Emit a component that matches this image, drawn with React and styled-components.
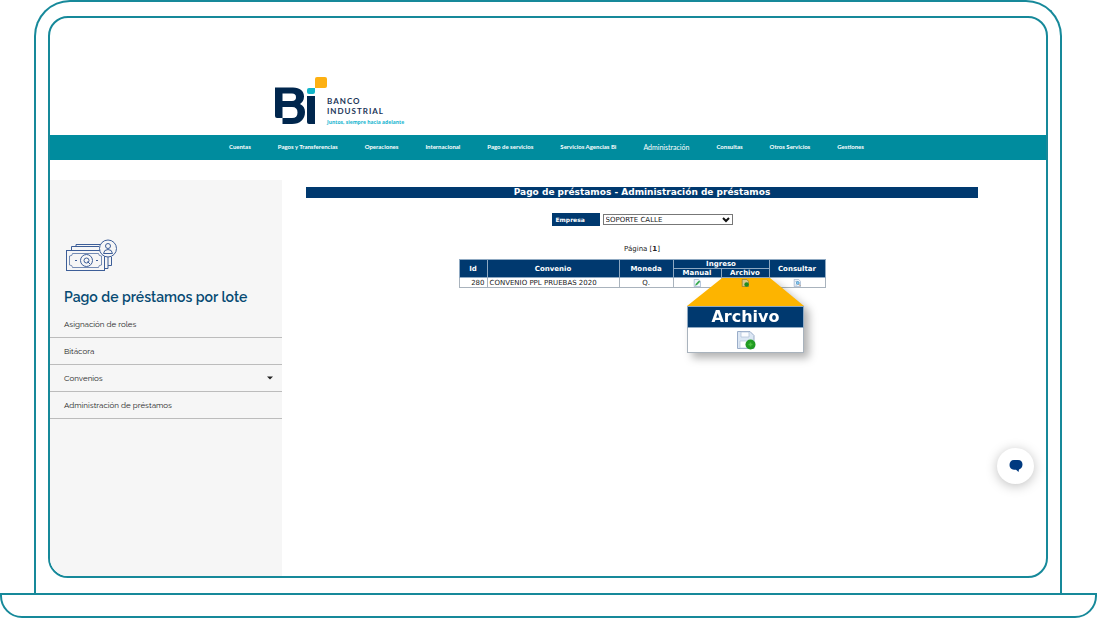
import React from 'react'
import styled, { createGlobalStyle } from 'styled-components'

const teal = '#008c9e'
const frame = '#16899a'
const navy = '#00396f'
const verdana = "Verdana, 'DejaVu Sans', sans-serif"

const GlobalStyle = createGlobalStyle`
  * {
    box-sizing: border-box;
  }
  body {
    margin: 0;
    background: #fff;
    font-family: Raleway, Lato, sans-serif;
  }
`

const Laptop = styled.div`
  min-height: 100vh;
  display: flex;
  flex-direction: column;
`

const Lid = styled.div`
  flex: 1;
  display: flex;
  margin: 0 35px 0 34px;
  padding: 14px 12px 15px;
  border: 2px solid ${frame};
  border-bottom: 0;
  border-radius: 36px 36px 0 0;
`

const Base = styled.div`
  height: 25px;
  border: 2px solid ${frame};
  border-radius: 0 0 22px 22px;
`

const Screen = styled.div`
  position: relative;
  flex: 1;
  display: flex;
  flex-direction: column;
  overflow: hidden;
  border: 2px solid ${frame};
  border-radius: 20px;
`

const Header = styled.header`
  display: flex;
  align-items: flex-start;
  height: 117px;
  padding: 58px 0 0 224px;
`

const Brand = styled.div`
  display: flex;
  flex-direction: column;
  padding-top: 20px;
  font-family: Lato, sans-serif;
  font-size: 8px;
  line-height: 10px;
  font-weight: bold;
  letter-spacing: 1px;
  color: #1b3558;
`

const Tagline = styled.span`
  padding-top: 3px;
  font-family: 'Open Sans', sans-serif;
  font-size: 5px;
  line-height: 6px;
  letter-spacing: normal;
  color: #19b5cf;
`

const Menu = styled.nav`
  display: flex;
  align-items: center;
  gap: 27px;
  height: 25px;
  padding: 0 0 2px 179px;
  background: ${teal};
`

const MenuLink = styled.a`
  font-family: Lato, sans-serif;
  font-size: ${props => (props.$active ? 7 : 6)}px;
  line-height: 8px;
  font-weight: ${props => (props.$active ? 'normal' : 'bold')};
  white-space: nowrap;
  color: #fff;
  text-decoration: none;
`

const Content = styled.div`
  flex: 1;
  display: flex;
`

const Sidebar = styled.aside`
  width: 232px;
  margin-top: 20px;
  padding-top: 59px;
  background: #f6f6f6;
`

const SideIcon = styled.svg`
  display: block;
  margin-left: 16px;
`

const SideTitle = styled.h1`
  margin: 14px 0 4px;
  padding-left: 14px;
  font-size: 14px;
  line-height: 20px;
  font-weight: 600;
  color: #064a73;
`

const SideItem = styled.a`
  display: flex;
  align-items: center;
  justify-content: space-between;
  width: 100%;
  height: 27px;
  padding: 0 9px 0 14px;
  border: 0;
  border-bottom: 1px solid #bcbcbc;
  background: none;
  font-family: inherit;
  font-size: 8px;
  color: #222;
  text-decoration: none;
`

const Main = styled.main`
  flex: 1;
  display: flex;
  flex-direction: column;
  align-items: center;
  padding: 27px 68px 0 24px;
  font-family: ${verdana};
  font-size: 7px;
  color: #222;
`

const Title = styled.h2`
  align-self: stretch;
  margin: 0 0 15px;
  font-size: 9px;
  line-height: 11px;
  text-align: center;
  color: #fff;
  background: ${navy};
`

const Field = styled.div`
  display: flex;
  align-items: center;
  gap: 3px;
`

const FieldLabel = styled.label`
  width: 48px;
  padding-left: 4px;
  font-size: 6px;
  line-height: 13px;
  font-weight: bold;
  color: #fff;
  background: ${navy};
`

const SelectBox = styled.div`
  display: grid;
  align-items: center;
  width: 130px;

  > * {
    grid-area: 1 / 1;
  }
  svg {
    justify-self: end;
    margin-right: 3px;
    pointer-events: none;
  }
`

const Select = styled.select`
  appearance: none;
  width: 100%;
  height: 11px;
  padding: 1px 2px 0;
  border: 1px solid #777;
  border-radius: 0;
  background: #fff;
  font-family: ${verdana};
  font-size: 7px;
  line-height: 8px;
  color: #222;
`

const Pager = styled.p`
  margin: 18px 0 5px;
  line-height: 10px;
`

const Table = styled.table`
  width: 366px;
  table-layout: fixed;
  border-collapse: collapse;
  line-height: 8px;
`

const Th = styled.th`
  padding: 0;
  border: 1px solid #8fa9c2;
  color: #fff;
  background: ${navy};
`

const Td = styled.td`
  position: relative;
  height: 10px;
  padding: 0 2px;
  border: 1px solid #a9b3bd;
  text-align: ${props => props.$align || 'center'};
  white-space: nowrap;
`

const IconButton = styled.button`
  position: relative;
  z-index: 2;
  display: block;
  margin: 0 auto;
  padding: 0;
  border: 0;
  background: none;

  svg {
    display: block;
  }
`

/* magnified view that hangs from the Archivo cell */
const Callout = styled.div`
  position: absolute;
  z-index: 1;
  top: 0;
  left: 50%;
  width: 117px;
  margin-left: -58px;
  filter: drop-shadow(5px 5px 4px rgba(0, 0, 0, 0.3));
`

const Beam = styled.div`
  height: 28px;
  background: #fdb400;
  clip-path: polygon(30% 0, 71% 0, 100% 100%, 0 100%);
`

const CalloutHead = styled.div`
  border: 1px solid #8fa9c2;
  font-size: 16px;
  line-height: 20px;
  font-weight: bold;
  text-align: center;
  color: #fff;
  background: ${navy};
`

const CalloutBody = styled.div`
  display: flex;
  justify-content: center;
  padding: 2px 0;
  border: 1px solid #a9b3bd;
  border-top: 0;
  background: #fff;
`

const ChatButton = styled.button`
  position: absolute;
  right: 12px;
  bottom: 92px;
  display: flex;
  align-items: center;
  justify-content: center;
  width: 37px;
  height: 36px;
  padding: 0;
  border: 0;
  border-radius: 50%;
  background: #fff;
  box-shadow: 0 2px 12px rgba(0, 0, 0, 0.25);
`

const Logo = () => (
  <svg width="53" height="50" viewBox="0 0 53 50" aria-label="Bi">
    <path
      fill="#00264d"
      fillRule="evenodd"
      d="M1 11.500H19C26 11.500 30 15 30 20.500C30 24.500 28 26.500 26 28C29.500 29.500 31 32.500 31 36C31 43.500 26 48 18 48H8.500V42H3Q1 42 1 40ZM8.500 17.500V25H18Q22 25 22 21.200Q22 17.500 18 17.500ZM8.500 31V42H18Q23.500 42 23.500 36.500Q23.500 31 18 31Z"
    />
    <path fill="#00264d" d="M33 20H41V48H35Q33 48 33 46Z" />
    <path fill="#12b5c9" d="M33 14Q33 12 35 12H41V16Q41 18 39 18H35Q33 18 33 16Z" />
    <path fill="#fdb012" d="M41 3Q41 1 43 1H51Q53 1 53 3V10Q53 12 51 12H41Z" />
  </svg>
)

const NotesIcon = () => (
  <SideIcon width="52" height="34" viewBox="0 0 52 34" fill="none" stroke="#3d5e98" strokeWidth="1" aria-hidden="true">
    <path d="M5.500 11V7.500H33M10 7.500V5.500H34M42 17V29.500H39" />
    <path d="M45.500 18V26.500H42" />
    <rect x="0.500" y="11.500" width="38" height="20" />
    <path d="M3.500 17Q6.500 17 6.500 14.500H32.500Q32.500 17 35.500 17V26Q32.500 26 32.500 28.500H6.500Q6.500 26 3.500 26Z" strokeWidth="0.700" />
    <circle cx="20.500" cy="21.500" r="6" />
    <circle cx="20.500" cy="21.500" r="2.500" />
    <path d="M21.500 22.500L24 25M9 21.500H11M30 21.500H32" />
    <circle cx="42" cy="9.500" r="8.500" fill="#f6f6f6" />
    <circle cx="42" cy="7" r="2.500" />
    <path d="M37.500 14.500Q38 10.500 42 10.500T46.500 14.500Z" />
  </SideIcon>
)

const Sheet = () => (
  <path d="M1.500 0.500H7L9.500 3V9.500H1.500Z" fill="#f0f6fc" stroke="#8ba4c4" strokeWidth="0.800" />
)

const EditIcon = () => (
  <svg width="8" height="8" viewBox="0 0 10 10">
    <Sheet />
    <path d="M2.500 8.500L3.500 6L7.500 2L9 3.500L5 7.500Z" fill="#35a94c" />
  </svg>
)

const UploadIcon = () => (
  <svg width="8" height="8" viewBox="0 0 10 10">
    <path d="M1.500 0.500H7L9.500 3V9.500H1.500Z" fill="#d8c98b" stroke="#806f34" strokeWidth="0.800" />
    <circle cx="7" cy="7" r="2.800" fill="#218a20" />
  </svg>
)

const ViewIcon = () => (
  <svg width="8" height="8" viewBox="0 0 10 10">
    <Sheet />
    <path d="M3 3H6M3 7.500H5" stroke="#9cb2cc" />
    <circle cx="6" cy="5" r="1.800" fill="#8bd0f2" stroke="#3f86bd" strokeWidth="0.800" />
    <path d="M7.300 6.500L9 8.500" stroke="#b66b35" />
  </svg>
)

const BigUploadIcon = () => (
  <svg width="20" height="20" viewBox="0 0 20 20">
    <path d="M1.500 1.500H14L18 5.500V18.500H1.500Z" fill="#dce7f4" stroke="#9aadc9" />
    <path d="M5 2H13V7H5Z" fill="#fafcff" stroke="#adbdd4" strokeWidth="0.700" />
    <path d="M4 11H15V18H4Z" fill="#fff" stroke="#b7c7da" strokeWidth="0.700" />
    <circle cx="14.500" cy="14.500" r="5" fill="#219b22" />
    <path d="M14.500 12.500V16.500M12.500 14.500H16.500" stroke="#4cc040" strokeWidth="1.500" />
  </svg>
)

const menu = [
  'Cuentas',
  'Pagos y Transferencias',
  'Operaciones',
  'Internacional',
  'Pago de servicios',
  'Servicios Agencias Bi',
  'Administración',
  'Consultas',
  'Otros Servicios',
  'Gestiones',
]

const App = () => (
  <>
    <GlobalStyle />
    <Laptop>
      <Lid>
        <Screen>
          <Header>
            <Logo />
            <Brand>
              <span>BANCO</span>
              <span>INDUSTRIAL</span>
              <Tagline>Juntos, siempre hacia adelante</Tagline>
            </Brand>
          </Header>
          <Menu>
            {menu.map(item => (
              <MenuLink key={item} href="#" $active={item === 'Administración'}>
                {item}
              </MenuLink>
            ))}
          </Menu>
          <Content>
            <Sidebar>
              <NotesIcon />
              <SideTitle>Pago de préstamos por lote</SideTitle>
              <SideItem href="#">Asignación de roles</SideItem>
              <SideItem href="#">Bitácora</SideItem>
              <SideItem as="button" type="button">
                Convenios
                <svg width="6" height="4" viewBox="0 0 6 4" aria-hidden="true">
                  <path d="M0 0.500H6L3 3.500Z" fill="#222" />
                </svg>
              </SideItem>
              <SideItem href="#">Administración de préstamos</SideItem>
            </Sidebar>
            <Main>
              <Title>Pago de préstamos - Administración de préstamos</Title>
              <Field>
                <FieldLabel htmlFor="empresa">Empresa</FieldLabel>
                <SelectBox>
                  <Select id="empresa">
                    <option>SOPORTE CALLE</option>
                  </Select>
                  <svg width="8" height="6" viewBox="0 0 8 6" aria-hidden="true">
                    <path d="M1 1L4 4L7 1" fill="none" stroke="#111" strokeWidth="2" />
                  </svg>
                </SelectBox>
              </Field>
              <Pager>
                Página [<b>1</b>]
              </Pager>
              <Table>
                <colgroup>
                  <col width="28" />
                  <col width="132" />
                  <col width="54" />
                  <col width="48" />
                  <col width="48" />
                  <col width="56" />
                </colgroup>
                <thead>
                  <tr>
                    <Th rowSpan="2">Id</Th>
                    <Th rowSpan="2">Convenio</Th>
                    <Th rowSpan="2">Moneda</Th>
                    <Th colSpan="2">Ingreso</Th>
                    <Th rowSpan="2">Consultar</Th>
                  </tr>
                  <tr>
                    <Th>Manual</Th>
                    <Th>Archivo</Th>
                  </tr>
                </thead>
                <tbody>
                  <tr>
                    <Td $align="right">280</Td>
                    <Td $align="left">CONVENIO PPL PRUEBAS 2020</Td>
                    <Td>Q.</Td>
                    <Td>
                      <IconButton aria-label="Manual"><EditIcon /></IconButton>
                    </Td>
                    <Td>
                      <IconButton aria-label="Archivo"><UploadIcon /></IconButton>
                      <Callout>
                        <Beam />
                        <CalloutHead>Archivo</CalloutHead>
                        <CalloutBody><BigUploadIcon /></CalloutBody>
                      </Callout>
                    </Td>
                    <Td>
                      <IconButton aria-label="Consultar"><ViewIcon /></IconButton>
                    </Td>
                  </tr>
                </tbody>
              </Table>
            </Main>
          </Content>
          <ChatButton aria-label="Chat">
            <svg width="14" height="12" viewBox="0 0 14 12">
              <path d="M5 0H9C12 0 13.500 2 13.500 4.500C13.500 7 12 9 10 9.500L9.500 12L7 9.800H5C2 9.500 0.500 7.500 0.500 5C0.500 2 2 0 5 0Z" fill="#003a80" />
            </svg>
          </ChatButton>
        </Screen>
      </Lid>
      <Base />
    </Laptop>
  </>
)

export default App
